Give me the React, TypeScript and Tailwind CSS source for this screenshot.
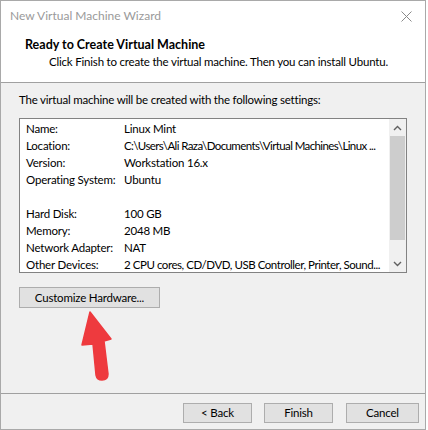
import React from 'react';

const rows: [string, string, string][] = [
  ['Name:', 'Linux Mint', ''],
  ['Location:', 'C:\\Users\\Ali Raza\\Documents\\Virtual Machines\\Linux ...', 'tracking-[-0.6px]'],
  ['Version:', 'Workstation 16.x', ''],
  ['Operating System:', 'Ubuntu', ''],
  ['', '', ''],
  ['Hard Disk:', '100 GB', ''],
  ['Memory:', '2048 MB', ''],
  ['Network Adapter:', 'NAT', ''],
  ['Other Devices:', '2 CPU cores, CD/DVD, USB Controller, Printer, Sound...', 'tracking-[-0.45px]'],
];

function WinButton({ label, className }: { label: string; className?: string }) {
  return (
    <div
      className={
        'h-[20px] border border-[#adadad] bg-[#e1e1e1] flex items-center justify-center text-[11.5px] tracking-[-0.2px] text-black ' +
        (className ?? '')
      }
    >
      {label}
    </div>
  );
}

export default function App() {
  return (
    <div className="w-[428px] h-[430px] bg-white relative">
      <div
        className="w-[426px] h-[430px] border border-[#a9a9a9] bg-[#f0f0f0] flex flex-col text-black"
        style={{ fontFamily: 'Lato, "Liberation Sans", sans-serif' }}
      >
        {/* Header */}
        <div className="h-[82px] bg-white border-b border-[#a0a0a0] shrink-0">
          <div className="h-[30px] flex items-center justify-between pl-[9px] pr-[9px]">
            <span className="text-[12px] text-[#9a9a9a]">New Virtual Machine Wizard</span>
            <svg width="11" height="11" viewBox="0 0 11 11" className="mr-[4px]">
              <path d="M0.5 0.5 L10.5 10.5 M10.5 0.5 L0.5 10.5" stroke="#8a8a8a" strokeWidth="1" />
            </svg>
          </div>
          <div className="pl-[24px] pt-[6px] text-[12.5px] font-bold leading-[16px]">
            Ready to Create Virtual Machine
          </div>
          <div className="pl-[48px] text-[11.5px] tracking-[-0.2px] leading-[17px]">
            Click Finish to create the virtual machine. Then you can install Ubuntu.
          </div>
        </div>

        {/* Body */}
        <div className="flex-1 flex flex-col px-[18px] text-[11.5px] tracking-[-0.2px]">
          <div className="mt-[9px] leading-[16px]">
            The virtual machine will be created with the following settings:
          </div>
          <div className="mt-[10px] h-[155px] border border-[#828282] bg-white flex">
            <div className="flex-1 pl-[6px] pt-[1px] leading-[17px] overflow-hidden">
              {rows.map(([k, v, t], i) => (
                <div key={i} className="flex h-[17px] whitespace-nowrap">
                  <span className="w-[98px] shrink-0">{k}</span>
                  <span className={t}>{v}</span>
                </div>
              ))}
            </div>
            <div className="w-[17px] bg-[#f0f0f0] flex flex-col">
              <div className="h-[17px] flex items-center justify-center">
                <svg width="9" height="6" viewBox="0 0 9 6">
                  <path d="M1 5 L4.5 1.5 L8 5" stroke="#606060" strokeWidth="1.4" fill="none" />
                </svg>
              </div>
              <div className="h-[104px] bg-[#cdcdcd] mx-[1px]" />
              <div className="flex-1" />
              <div className="h-[17px] flex items-center justify-center">
                <svg width="9" height="6" viewBox="0 0 9 6">
                  <path d="M1 1 L4.5 4.5 L8 1" stroke="#606060" strokeWidth="1.4" fill="none" />
                </svg>
              </div>
            </div>
          </div>
          <WinButton label="Customize Hardware..." className="mt-[14px] w-[141px] h-[21px]" />
        </div>

        {/* Footer */}
        <div className="h-[36px] border-t border-[#a0a0a0] shrink-0 flex justify-end items-start pt-[9px] pr-[6px] gap-[13px]">
          <WinButton label="< Back" className="w-[69px] -mr-[1px]" />
          <WinButton label="Finish" className="w-[69px]" />
          <WinButton label="Cancel" className="w-[73px]" />
        </div>
      </div>

      {/* Annotation arrow */}
      <svg className="absolute left-0 top-0" width="428" height="430" viewBox="0 0 428 430">
        <path
          d="M90 312 L111 339 L104 341 L108 374 Q108 380 102 380 Q97 380 96 375 L93 344 L82 345 Z"
          fill="#ee3a3e"
          stroke="#ee3a3e"
          strokeWidth="1.5"
          strokeLinejoin="round"
        />
      </svg>
    </div>
  );
}
